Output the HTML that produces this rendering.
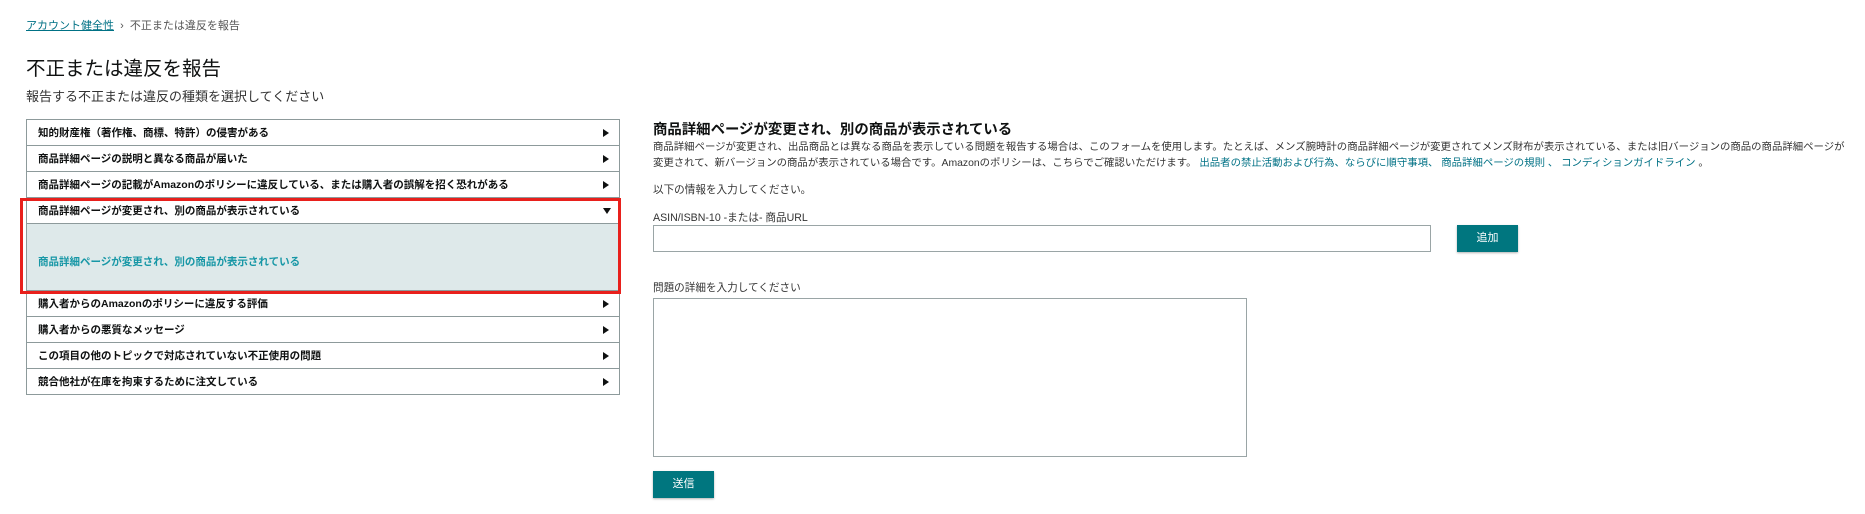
<!DOCTYPE html>
<html><head><meta charset="utf-8"><style>
*{box-sizing:border-box;margin:0;padding:0}
body{width:1865px;height:514px;background:#fff;font-family:"Liberation Sans","Noto Sans CJK JP",sans-serif;color:#0f1111;position:relative;overflow:hidden}
.a{position:absolute;white-space:nowrap}
.bc{left:26px;top:17px;font-size:11px;color:#555}
.bc u{color:#007185}
.t{left:26px;top:52px;font-size:19.5px;color:#0f1111}
.st{left:26px;top:86px;font-size:13px;color:#333}
.list{position:absolute;left:26px;top:119px;width:594px;border:1px solid #8d9a9b;border-bottom:none}
.row{height:26px;border-bottom:1px solid #8d9a9b;font-size:10.5px;font-weight:bold;display:flex;align-items:center;padding-left:11px;position:relative}
.row:after{content:"";position:absolute;right:10px;top:9px;border-left:6px solid #0f1111;border-top:4px solid transparent;border-bottom:4px solid transparent}
.row.open:after{border-top:6px solid #0f1111;border-left:4px solid transparent;border-right:4px solid transparent;border-bottom:none;top:10px;right:8px}
.content{height:67px;background:#dee9ea;border-bottom:1px solid #8d9a9b;font-size:10.5px;font-weight:bold;color:#1797a6;padding:30px 0 0 11px}
.red{position:absolute;left:20px;top:198px;width:601px;height:96px;border:3px solid #e8201c}
.h{left:653px;top:118px;font-size:14.4px;font-weight:bold}
.p{left:653px;top:140px;font-size:10.4px;line-height:16px;color:#333}
.p span{color:#007185}
.l{font-size:10.6px;color:#333}
.in{position:absolute;border:1px solid #9aa5a6;background:#fff}
.btn{position:absolute;background:#00767f;color:#fff;font-size:11px;text-align:center;box-shadow:0 1px 2px rgba(0,0,0,.3)}
</style></head><body>
<div class="a bc"><u>アカウント健全性</u> &nbsp;›&nbsp; 不正または違反を報告</div>
<div class="a t">不正または違反を報告</div>
<div class="a st">報告する不正または違反の種類を選択してください</div>
<div class="list">
<div class="row">知的財産権（著作権、商標、特許）の侵害がある</div>
<div class="row">商品詳細ページの説明と異なる商品が届いた</div>
<div class="row">商品詳細ページの記載がAmazonのポリシーに違反している、または購入者の誤解を招く恐れがある</div>
<div class="row open">商品詳細ページが変更され、別の商品が表示されている</div>
<div class="content">商品詳細ページが変更され、別の商品が表示されている</div>
<div class="row">購入者からのAmazonのポリシーに違反する評価</div>
<div class="row">購入者からの悪質なメッセージ</div>
<div class="row">この項目の他のトピックで対応されていない不正使用の問題</div>
<div class="row">競合他社が在庫を拘束するために注文している</div>
</div>
<div class="red"></div>
<div class="a h">商品詳細ページが変更され、別の商品が表示されている</div>
<div class="a p">商品詳細ページが変更され、出品商品とは異なる商品を表示している問題を報告する場合は、このフォームを使用します。たとえば、メンズ腕時計の商品詳細ページが変更されてメンズ財布が表示されている、または旧バージョンの商品の商品詳細ページが<br>変更されて、新バージョンの商品が表示されている場合です。Amazonのポリシーは、こちらでご確認いただけます。 <span>出品者の禁止活動および行為、ならびに順守事項、 商品詳細ページの規則 、 コンディションガイドライン</span> 。</div>
<div class="a l" style="left:653px;top:182px">以下の情報を入力してください。</div>
<div class="a l" style="left:653px;top:210px">ASIN/ISBN-10 -または- 商品URL</div>
<div class="in" style="left:653px;top:225px;width:778px;height:27px"></div>
<div class="btn" style="left:1457px;top:225px;width:61px;height:27px;line-height:27px">追加</div>
<div class="a l" style="left:653px;top:280px">問題の詳細を入力してください</div>
<div class="in" style="left:653px;top:298px;width:594px;height:159px"></div>
<div class="btn" style="left:653px;top:471px;width:61px;height:27px;line-height:27px">送信</div>
</body></html>
